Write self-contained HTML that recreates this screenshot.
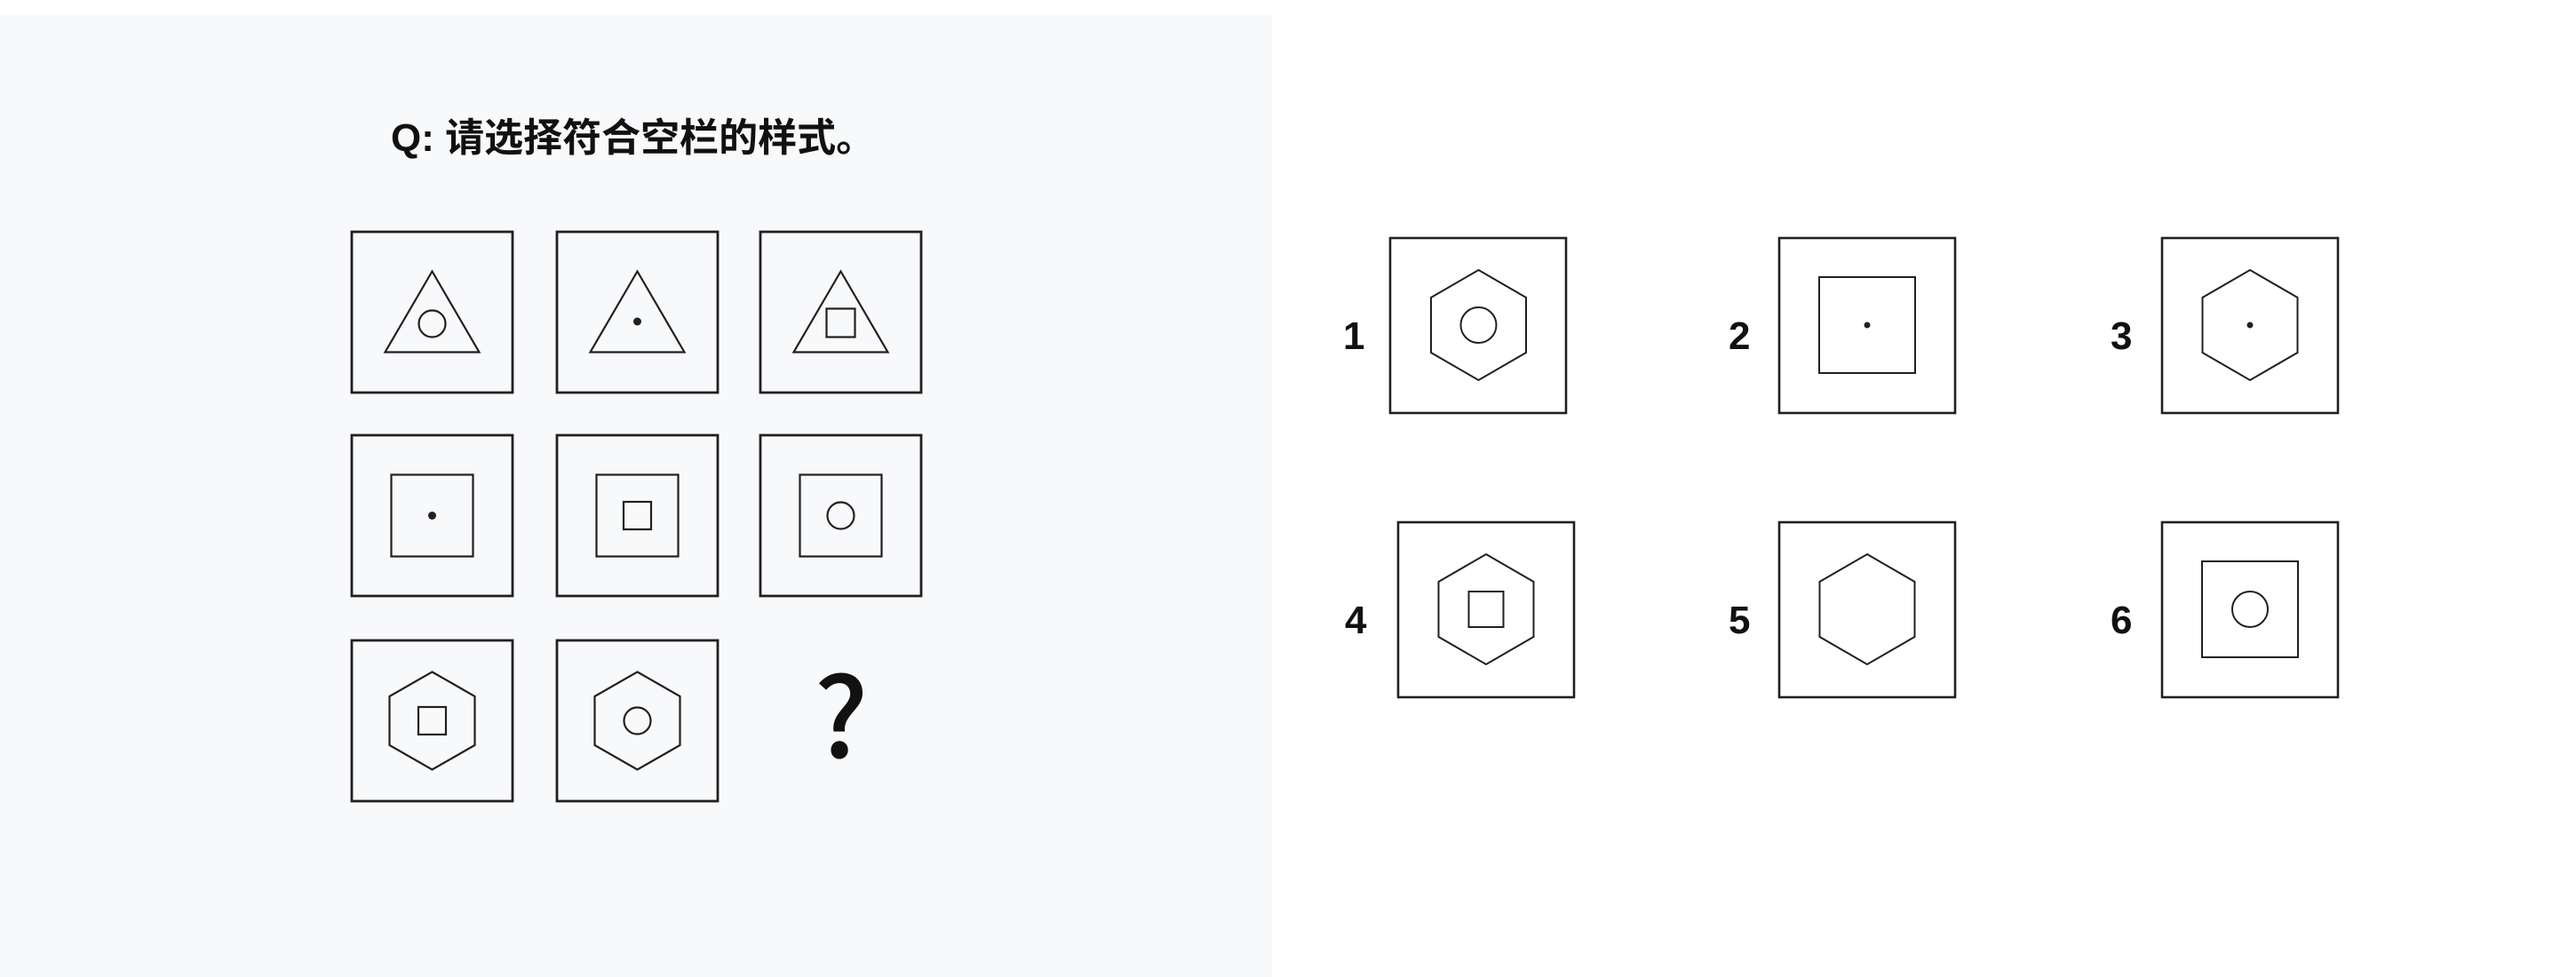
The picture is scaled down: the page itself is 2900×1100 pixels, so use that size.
<!DOCTYPE html>
<html><head><meta charset="utf-8"><style>
html,body{margin:0;padding:0;background:#fff;width:2900px;height:1100px;overflow:hidden}
svg{display:block}
text{font-family:"Liberation Sans","Noto Sans CJK SC",sans-serif;fill:#111}
</style></head><body>
<svg width="2900" height="1100" viewBox="0 0 2900 1100" xmlns="http://www.w3.org/2000/svg">
<defs>
<polygon id="tri" points="0,-46 53,45 -53,45"/>
<polygon id="hexs" points="0,-55 48,-27.5 48,27.5 0,55 -48,27.5 -48,-27.5"/>
<polygon id="hexl" points="0,-62 53.5,-31 53.5,31 0,62 -53.5,31 -53.5,-31"/>
</defs>
<rect x="0" y="17" width="1432" height="1083" fill="#f8f9fb"/>
<text x="440" y="170" font-size="44" font-weight="bold">Q: 请选择符合空栏的样式。</text>

<g transform="translate(2,0)">
<g fill="none" stroke="#231f20" stroke-width="2.8">
<rect x="394" y="261" width="181" height="181"/>
<rect x="625" y="261" width="181" height="181"/>
<rect x="854" y="261" width="181" height="181"/>
<rect x="394" y="490" width="181" height="181"/>
<rect x="625" y="490" width="181" height="181"/>
<rect x="854" y="490" width="181" height="181"/>
<rect x="394" y="721" width="181" height="181"/>
<rect x="625" y="721" width="181" height="181"/>
</g>
<g fill="none" stroke="#231f20" stroke-width="2.2">
<g transform="translate(484.5,351.5)"><use href="#tri"/><circle cx="0" cy="13" r="15"/></g>
<g transform="translate(715.5,351.5)"><use href="#tri"/></g>
<g transform="translate(944.5,351.5)"><use href="#tri"/><rect x="-16" y="-4" width="32" height="32"/></g>
<g transform="translate(484.5,580.5)"><rect x="-46" y="-46" width="92" height="92"/></g>
<g transform="translate(715.5,580.5)"><rect x="-46" y="-46" width="92" height="92"/><rect x="-15.5" y="-15.5" width="31" height="31"/></g>
<g transform="translate(944.5,580.5)"><rect x="-46" y="-46" width="92" height="92"/><circle r="15"/></g>
<g transform="translate(484.5,811.5)"><use href="#hexs"/><rect x="-15.5" y="-15.5" width="31" height="31"/></g>
<g transform="translate(715.5,811.5)"><use href="#hexs"/><circle r="15"/></g>
</g>
<circle cx="715.5" cy="362" r="4.5" fill="#231f20"/>
<circle cx="484.5" cy="580.5" r="4.5" fill="#231f20"/>
</g>
<text x="947" y="853" font-size="124" font-weight="500" text-anchor="middle" style="font-family:'Noto Sans CJK SC',sans-serif">?</text>

<g fill="none" stroke="#231f20" stroke-width="2.6">
<rect x="1565" y="268" width="198" height="197"/>
<rect x="2003" y="268" width="198" height="197"/>
<rect x="2434" y="268" width="198" height="197"/>
<rect x="1574" y="588" width="198" height="197"/>
<rect x="2003" y="588" width="198" height="197"/>
<rect x="2434" y="588" width="198" height="197"/>
</g>
<g fill="none" stroke="#231f20" stroke-width="2">
<g transform="translate(1664.5,366)"><use href="#hexl"/><circle r="20"/></g>
<g transform="translate(2102,366)"><rect x="-54" y="-54" width="108" height="108"/></g>
<g transform="translate(2533,366)"><use href="#hexl"/></g>
<g transform="translate(1673,686)"><use href="#hexl"/><rect x="-19.5" y="-20" width="39" height="40"/></g>
<g transform="translate(2102,686)"><use href="#hexl"/></g>
<g transform="translate(2533,686)"><rect x="-54" y="-54" width="108" height="108"/><circle r="20"/></g>
</g>
<circle cx="2102" cy="366" r="3.5" fill="#231f20"/>
<circle cx="2533" cy="366" r="3.5" fill="#231f20"/>
<g font-size="44" font-weight="bold">
<text x="1512" y="393">1</text>
<text x="1946" y="393">2</text>
<text x="2376" y="393">3</text>
<text x="1514" y="713">4</text>
<text x="1946" y="713">5</text>
<text x="2376" y="713">6</text>
</g>
</svg>
</body></html>
